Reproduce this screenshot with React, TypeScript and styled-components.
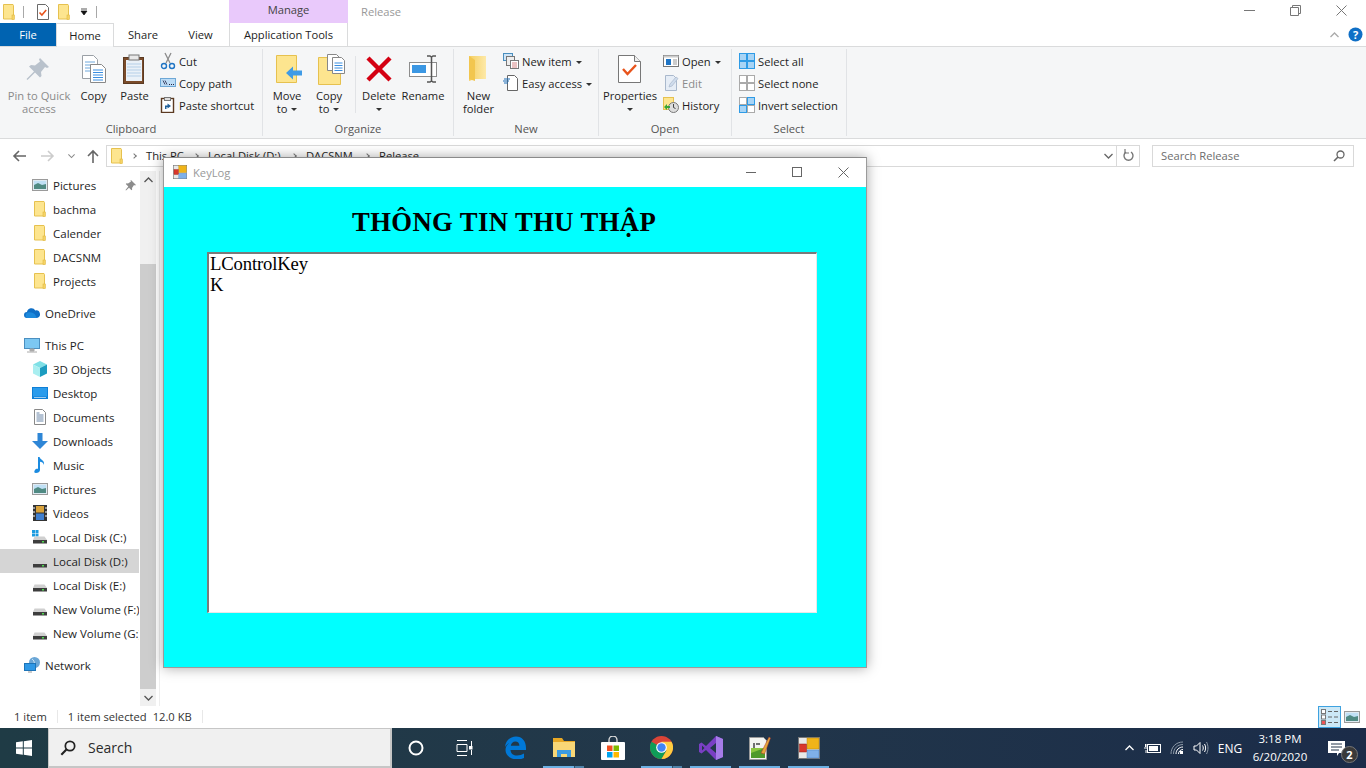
import React from "react";
import styled, { createGlobalStyle } from "styled-components";

const GlobalStyle = createGlobalStyle`
  html, body {
    margin: 0;
    padding: 0;
    width: 1366px;
    height: 768px;
    overflow: hidden;
    background: #fff;
  }
  * { box-sizing: border-box; }
  svg { display: block; flex: none; }
`;

const Desktop = styled.div`
  position: relative;
  width: 1366px;
  height: 768px;
  display: flex;
  flex-direction: column;
  background: #fff;
  color: #1e1e1e;
  font-family: "Open Sans", "Noto Sans", sans-serif;
  font-size: 11.2px;
  overflow: hidden;
`;
const Spacer = styled.span<{ $w: number }>`
  width: ${(p) => p.$w}px;
  flex: none;
`;

/* ---------- title bar ---------- */
const TitleBar = styled.div`
  height: 23px;
  display: flex;
  align-items: stretch;
  flex: none;
  padding-right: 2px;
`;
const QuickAccess = styled.div`
  width: 229px;
  display: flex;
  align-items: center;
  padding-left: 1px;
`;
const QatSep = styled.span<{ $left: number; $right: number }>`
  width: 1px;
  height: 12px;
  background: #a8a8a8;
  margin: 0 ${(p) => p.$right}px 0 ${(p) => p.$left}px;
`;
const ManageTab = styled.div`
  width: 119px;
  background: #e9c9fb;
  color: #444;
  text-align: center;
  line-height: 20px;
`;
const WindowTitle = styled.div`
  padding-left: 13px;
  color: #999;
  line-height: 24px;
  flex: 1;
`;
const WinButton = styled.div`
  width: 46px;
  display: flex;
  align-items: center;
  justify-content: center;
  padding-bottom: 3px;
`;

/* ---------- tabs ---------- */
const TabRow = styled.div`
  height: 24px;
  display: flex;
  flex: none;
  border-bottom: 1px solid #dadbdc;
`;
const FileTab = styled.div`
  width: 56px;
  height: 23px;
  background: #0063b1;
  color: #fff;
  text-align: center;
  line-height: 23px;
`;
const Tab = styled.div<{ $width: number; $active?: boolean; $bordered?: boolean }>`
  width: ${(p) => p.$width}px;
  height: 24px;
  text-align: center;
  line-height: 23px;
  background: ${(p) => (p.$active ? "linear-gradient(#fff 0 22px, #f5f6f7 22px)" : "transparent")};
  border-left: ${(p) => (p.$active || p.$bordered ? "1px solid #dadbdc" : "0")};
  border-right: ${(p) => (p.$active || p.$bordered ? "1px solid #dadbdc" : "0")};
  border-top: ${(p) => (p.$active ? "1px solid #dadbdc" : "0")};
`;
const TabTools = styled.div`
  margin-left: auto;
  display: flex;
  align-items: center;
  gap: 9px;
  padding-right: 3px;
  height: 23px;
`;

/* ---------- ribbon ---------- */
const Ribbon = styled.div`
  height: 92px;
  display: flex;
  flex: none;
  background: #f5f6f7;
  border-bottom: 1px solid #dadbdc;
  padding-top: 2px;
`;
const Group = styled.div<{ $width: number }>`
  width: ${(p) => p.$width}px;
  height: 87px;
  border-right: 1px solid #e1e3e6;
  display: flex;
  flex-direction: column;
`;
const GroupBody = styled.div`
  height: 73px;
  display: flex;
`;
const GroupLabel = styled.div`
  text-align: center;
  color: #555;
  line-height: 14px;
`;
const LargeButton = styled.div<{ $width: number; $muted?: boolean }>`
  width: ${(p) => p.$width}px;
  display: flex;
  flex-direction: column;
  align-items: center;
  text-align: center;
  line-height: 13px;
  color: ${(p) => (p.$muted ? "#8b8b8b" : "#1e1e1e")};
  padding-top: 5px;
  white-space: nowrap;
`;
const LargeIcon = styled.div`
  height: 34px;
  margin-bottom: 1px;
  display: flex;
  align-items: flex-start;
  justify-content: center;
`;
const Caret = styled.span`
  display: inline-block;
  width: 0;
  height: 0;
  border-left: 3px solid transparent;
  border-right: 3px solid transparent;
  border-top: 3px solid #333;
  vertical-align: 2px;
  margin-left: 4px;
`;
const CaretLine = styled.div`
  height: 13px;
  margin-left: -4px;
`;
const RibbonSep = styled.div`
  width: 1px;
  height: 57px;
  margin: 7px 0 0 8px;
  background: #e1e3e6;
`;
const SmallColumn = styled.div<{ $pad?: number }>`
  display: flex;
  flex-direction: column;
  padding-top: 1px;
  padding-left: ${(p) => p.$pad ?? 0}px;
`;
const SmallButton = styled.div<{ $muted?: boolean }>`
  height: 22px;
  display: flex;
  align-items: center;
  gap: 3px;
  white-space: nowrap;
  color: ${(p) => (p.$muted ? "#8b8b8b" : "#1e1e1e")};
`;

/* ---------- address bar ---------- */
const AddressRow = styled.div`
  height: 32px;
  display: flex;
  align-items: center;
  flex: none;
  padding-top: 1px;
`;
const NavButtons = styled.div`
  width: 106px;
  display: flex;
  align-items: center;
  padding-left: 12px;
`;
const AddressBox = styled.div`
  width: 1034px;
  height: 22px;
  border: 1px solid #d9d9d9;
  display: flex;
  align-items: center;
  padding-left: 2px;
`;
const Crumb = styled.span<{ $width: number }>`
  width: ${(p) => p.$width}px;
  white-space: nowrap;
`;
const CrumbArrow = styled.span`
  display: inline-block;
  width: 4px;
  height: 4px;
  border-top: 1px solid #777;
  border-right: 1px solid #777;
  transform: rotate(45deg);
  margin-right: 10px;
`;
const AddressEnd = styled.div`
  margin-left: auto;
  display: flex;
  align-items: center;
  height: 100%;
`;
const RefreshCell = styled.div`
  width: 23px;
  height: 100%;
  border-left: 1px solid #d9d9d9;
  display: flex;
  align-items: center;
  justify-content: center;
`;
const SearchBox = styled.div`
  width: 202px;
  height: 22px;
  margin-left: 12px;
  border: 1px solid #d9d9d9;
  display: flex;
  align-items: center;
  justify-content: space-between;
  padding: 0 8px;
  color: #6d6d6d;
`;

/* ---------- explorer body ---------- */
const Body = styled.div`
  flex: 1;
  display: flex;
  min-height: 0;
`;
const NavPane = styled.div`
  width: 140px;
  padding-top: 2px;
  overflow: hidden;
  flex: none;
  font-size: 11.5px;
`;
const NavRow = styled.div<{ $level: number; $selected?: boolean; $gap?: boolean }>`
  height: 24px;
  display: flex;
  align-items: center;
  gap: 5px;
  white-space: nowrap;
  padding-left: ${(p) => (p.$level === 2 ? 32 : 24)}px;
  background: ${(p) => (p.$selected ? "#d5d5d5" : "transparent")};
  margin-top: ${(p) => (p.$gap ? 8 : 0)}px;
  width: 139px;
  overflow: hidden;
`;
const NavIconBox = styled.span`
  width: 16px;
  height: 16px;
  flex: none;
  display: flex;
  align-items: center;
  justify-content: center;
`;
const PinSlot = styled.span`
  margin-left: auto;
  padding-right: 3px;
`;
const Scrollbar = styled.div`
  width: 16px;
  flex: none;
  display: flex;
  flex-direction: column;
  background: #f0f0f0;
`;
const ScrollEnd = styled.div`
  height: 17px;
  display: flex;
  align-items: center;
  justify-content: center;
`;
const ScrollTrack = styled.div`
  flex: 1;
  padding-top: 76px;
  display: flex;
`;
const ScrollThumb = styled.div`
  flex: 1;
  background: #cdcdcd;
`;
const PaneDivider = styled.div`
  width: 1px;
  margin-left: 3px;
  background: #eeeeee;
`;
const StatusBar = styled.div`
  height: 22px;
  display: flex;
  align-items: center;
  flex: none;
  padding: 0 0 2px 14px;
  color: #333;
`;
const StatusSep = styled.span<{ $left: number; $right: number }>`
  width: 1px;
  height: 13px;
  background: #e8e8e8;
  margin: 0 ${(p) => p.$right}px 0 ${(p) => p.$left}px;
`;
const ViewButtons = styled.div`
  margin-left: auto;
  display: flex;
  align-items: center;
  padding: 2px 4px 0 0;
  height: 22px;
`;
const ViewButton = styled.div<{ $active?: boolean }>`
  width: ${(p) => (p.$active ? 23 : 15)}px;
  height: 22px;
  margin-right: 3px;
  display: flex;
  align-items: center;
  justify-content: center;
  ${(p) => (p.$active ? "background: #cce8f6; border: 1px solid #3ea2e0;" : "")}
`;

/* ---------- taskbar ---------- */
const Taskbar = styled.div`
  height: 40px;
  flex: none;
  display: flex;
  align-items: stretch;
  background: linear-gradient(90deg, #1f3b45 0%, #22374a 50%, #1b2c49 100%);
  color: #fff;
`;
const StartButton = styled.div`
  width: 48px;
  display: flex;
  align-items: center;
  justify-content: center;
`;
const TaskSearch = styled.div`
  width: 344px;
  background: #f0f0f0;
  border: 1px solid #c6c6c6;
  border-width: 1px 2px 2px 1px;
  display: flex;
  align-items: center;
  gap: 12px;
  padding-left: 11px;
  color: #2b2b2b;
  font-size: 14px;
`;
const TaskSlot = styled.div<{ $width: number; $open?: boolean; $split?: boolean }>`
  position: relative;
  width: ${(p) => p.$width}px;
  display: flex;
  align-items: center;
  justify-content: center;
  padding-bottom: 1px;
  &::after {
    content: "";
    display: ${(p) => (p.$open ? "block" : "none")};
    position: absolute;
    left: 4px;
    right: 4px;
    bottom: 0;
    height: 2px;
    background: ${(p) =>
      p.$split
        ? "linear-gradient(90deg, #6cb0e3 0 31px, #2f4f68 31px 32px, #4f82a8 32px)"
        : "#6cb0e3"};
  }
`;
const Tray = styled.div`
  margin-left: auto;
  display: flex;
  align-items: center;
  font-size: 12px;
`;
const TraySlot = styled.div<{ $width: number; $pad?: number }>`
  width: ${(p) => p.$width}px;
  padding-left: ${(p) => p.$pad ?? 0}px;
  display: flex;
  align-items: center;
  justify-content: center;
`;
const Clock = styled.div`
  width: 76px;
  text-align: center;
  line-height: 18px;
  font-size: 11.5px;
`;
const NotifyWrap = styled.div`
  position: relative;
  width: 48px;
  height: 40px;
  display: flex;
  align-items: center;
  justify-content: center;
  padding-right: 11px;
`;
const NotifyBadge = styled.div`
  position: absolute;
  left: 23px;
  top: 18px;
  width: 17px;
  height: 17px;
  border-radius: 50%;
  background: #3a3a3a;
  border: 1px solid #777;
  text-align: center;
  line-height: 15px;
  font-size: 11px;
  font-weight: 700;
`;

/* ---------- KeyLog window ---------- */
const FormWindow = styled.div`
  position: absolute;
  left: 163px;
  top: 157px;
  width: 704px;
  height: 511px;
  display: flex;
  flex-direction: column;
  background: #00ffff;
  border: 1px solid #9b9b9b;
  border-top-color: #8a8a8a;
  box-shadow: 0 0 12px rgba(0, 0, 0, 0.35);
`;
const FormTitleBar = styled.div`
  height: 29px;
  flex: none;
  background: #fff;
  display: flex;
  align-items: center;
  padding: 0 0 1px 9px;
  gap: 6px;
  color: #999;
`;
const FormControls = styled.div`
  margin-left: auto;
  display: flex;
  align-items: center;
`;
const FormControl = styled.div`
  width: 46px;
  display: flex;
  justify-content: center;
`;
const Heading = styled.div`
  height: 65px;
  padding-top: 20px;
  padding-left: 188px;
  font-family: "Liberation Serif", serif;
  font-weight: 700;
  font-size: 26.67px;
  letter-spacing: 0.4px;
  line-height: 31px;
  color: #000;
  white-space: nowrap;
`;
const LogBox = styled.div`
  width: 610px;
  height: 361px;
  margin-left: 43px;
  background: #fff;
  border-style: solid;
  border-width: 2px 1px 1px 2px;
  border-color: #7a7a7a #e8e8e8 #e8e8e8 #7a7a7a;
  padding: 0 1px;
  font-family: "Liberation Serif", serif;
  font-size: 18.67px;
  letter-spacing: -0.15px;
  color: #000;
`;
const LogLine = styled.div`
  height: 21px;
  line-height: 19px;
`;

/* ---------- icons ---------- */
const Folder = ({ s = 16 }: { s?: number }) => (
  <svg width={s} height={s} viewBox="0 0 16 16">
    <path d="M2.500 .5h9.500l.5 1v13.500h-10z" fill="#fde58f" stroke="#e6c14f" />
    <rect x="11" y="11" width="2.400" height="4.500" fill="#f6d365" stroke="#e0b840" strokeWidth=".6" />
  </svg>
);
const CheckDoc = ({ s = 16 }: { s?: number }) => (
  <svg width={s} height={s} viewBox="0 0 16 16">
    <path d="M2.500 .5h8l3 3v12h-11z" fill="#fff" stroke="#6a6a6a" />
    <path d="M4.500 8.500l2.400 2.500 4.300-5" fill="none" stroke="#e8541c" strokeWidth="1.600" />
  </svg>
);
const Pin = () => (
  <svg width="30" height="30" viewBox="0 0 30 30">
    <path d="M16 4l9 9-2 1-2-1-4 5 .5 4-1.500 1.500-5-5-7.500 7.500-1-1 7.500-7.500-5-5L7 11l4 .5 5-4-1-2z" fill="#b9c2cc" />
  </svg>
);
const CopyLarge = () => (
  <svg width="26" height="30" viewBox="0 0 26 30">
    <path d="M1.500 1.500h11l4 4v19h-15z" fill="#fff" stroke="#9aa0a6" />
    <g stroke="#6fa8dc"><path d="M4 8h10M4 11h10M4 14h10M4 17h10" /></g>
    <path d="M9.500 10.500h11l4 4v14h-15z" fill="#fff" stroke="#888" />
    <g stroke="#3b8ee0"><path d="M12 16h10M12 18.500h10M12 21h10M12 23.500h10M12 26h10" /></g>
  </svg>
);
const PasteLarge = () => (
  <svg width="24" height="30" viewBox="0 0 24 30">
    <rect x=".5" y="3.500" width="20" height="26" fill="#7a4b2a" stroke="#5b3a22" />
    <rect x="3" y="6" width="16" height="21" fill="#eaf1f8" />
    <g stroke="#b5cfe8"><path d="M4 10h14M4 13h14M4 16h14M4 19h14M4 22h14" /></g>
    <rect x="6" y="1" width="10" height="5" fill="#e8e8e8" stroke="#777" />
  </svg>
);
const Scissors = () => (
  <svg width="16" height="18" viewBox="0 0 16 18">
    <path d="M5 1l5 10M11 1L6 11" stroke="#8b8b8b" strokeWidth="1.300" fill="none" />
    <circle cx="4" cy="14" r="2.500" fill="none" stroke="#1f74c4" strokeWidth="1.400" />
    <circle cx="12" cy="14" r="2.500" fill="none" stroke="#1f74c4" strokeWidth="1.400" />
  </svg>
);
const CopyPath = () => (
  <svg width="16" height="16" viewBox="0 0 16 16">
    <rect x=".5" y="3.500" width="15" height="8" fill="#bcdcf6" stroke="#6ea8d6" />
    <path d="M3 5.500l2 4M5 5.500l2 4" stroke="#224" strokeWidth=".8" />
    <path d="M9 9.500h1M11 9.500h1M13 9.500h1" stroke="#224" />
  </svg>
);
const PasteShortcut = () => (
  <svg width="16" height="16" viewBox="0 0 16 16">
    <rect x="1.500" y="1.500" width="12" height="14" fill="#fff" stroke="#5b3a22" strokeWidth="1.400" />
    <rect x="4.500" y=".5" width="6" height="3" fill="#ddd" stroke="#777" />
    <path d="M5 12V8.500h2.500V6.500L11 9l-3.500 2.500V10H6.500v2z" fill="#1f5f99" />
  </svg>
);
const MoveTo = () => (
  <svg width="31" height="30" viewBox="-3 0 31 30">
    <path d="M1.500 1.500h20v27h-20z" fill="#fde58f" stroke="#e6c14f" />
    <path d="M11 19l7-6.500v4h9v5h-9v4z" fill="#3f9be6" />
  </svg>
);
const CopyTo = () => (
  <svg width="31" height="32" viewBox="-3 0 31 32">
    <path d="M1.500 3.500h22v27h-22z" fill="#fde58f" stroke="#e6c14f" />
    <path d="M10.500 .5h9l3 3v13h-12z" fill="#fff" stroke="#888" />
    <path d="M15.500 3.500h9l3 3v13h-12z" fill="#fff" stroke="#888" />
    <g stroke="#3b8ee0"><path d="M17.500 9h8M17.500 11.500h8M17.500 14h8M17.500 16.500h8" /></g>
  </svg>
);
const DeleteX = () => (
  <svg width="28" height="30" viewBox="0 0 28 30">
    <path d="M3 4l22 22M25 4L3 26" stroke="#d40012" strokeWidth="4.400" />
  </svg>
);
const Rename = () => (
  <svg width="28" height="30" viewBox="0 0 28 30">
    <rect x=".5" y="8.500" width="27" height="14" fill="#fff" stroke="#8d8d8d" />
    <rect x="3" y="11" width="14" height="8" fill="#3b97e3" />
    <path d="M18 2h3l1.500 1L24 2h3M22.500 3v24M18 28h3l1.500-1 1.500 1h3" fill="none" stroke="#555" strokeWidth="1.500" />
  </svg>
);
const NewFolder = () => (
  <svg width="22" height="30" viewBox="0 0 22 30">
    <defs>
      <linearGradient id="nf" x1="0" x2="1" y1="0" y2="0">
        <stop offset="0" stopColor="#f5cf62" />
        <stop offset="1" stopColor="#fde9a8" />
      </linearGradient>
    </defs>
    <path d="M1 2h17v23H7l-6 2z" fill="url(#nf)" />
    <path d="M1 2l6 4v21l-6-2z" fill="#f2c64f" />
  </svg>
);
const NewItem = () => (
  <svg width="16" height="16" viewBox="0 0 16 16">
    <rect x=".5" y=".5" width="9" height="7" fill="#cfe5f7" stroke="#4a8fbf" />
    <rect x="3.500" y="3.500" width="8" height="9" fill="#eee" stroke="#777" />
    <rect x="7.500" y="7.500" width="8" height="8" fill="#fff" stroke="#777" />
    <path d="M9 10h5M9 12h5M9 14h5" stroke="#c66" strokeWidth=".8" />
  </svg>
);
const EasyAccess = () => (
  <svg width="16" height="16" viewBox="0 0 16 16">
    <path d="M4.500 .5h7l3 3v12h-10z" fill="#fff" stroke="#666" />
    <path d="M1 4h6M0 6h6M1 8h4" stroke="#1f6fb8" />
  </svg>
);
const PropertiesIcon = () => (
  <svg width="24" height="30" viewBox="0 0 24 30">
    <path d="M.5 1.500h16l6 6v21H.5z" fill="#fff" stroke="#777" />
    <path d="M16.500 1.500v6h6" fill="#eee" stroke="#777" />
    <path d="M5 15l4.500 5 8.500-9" fill="none" stroke="#e8541c" strokeWidth="2.400" />
  </svg>
);
const OpenIcon = () => (
  <svg width="16" height="16" viewBox="0 0 16 16">
    <rect x=".5" y="2.500" width="15" height="11" fill="#fff" stroke="#777" />
    <rect x=".5" y="2.500" width="15" height="2" fill="#ccc" />
    <rect x="3" y="6" width="5" height="6" fill="#1f74c4" />
    <path d="M10 7h4M10 9h4M10 11h4" stroke="#999" />
  </svg>
);
const EditIcon = () => (
  <svg width="16" height="16" viewBox="0 0 16 16">
    <path d="M2.500 .5h8l3 3v12h-11z" fill="#e6edf6" stroke="#a9b8cc" />
    <path d="M6 12l1-3 6-7 2 1.500-6 7.500z" fill="#cfdcec" stroke="#a9b8cc" strokeWidth=".7" />
  </svg>
);
const HistoryIcon = () => (
  <svg width="16" height="16" viewBox="0 0 16 16">
    <rect x=".5" y=".5" width="10" height="12" fill="#fde58f" stroke="#e6c14f" />
    <circle cx="10.500" cy="10.500" r="5" fill="#ddd" stroke="#777" />
    <path d="M10.500 7v3.500l2 1" fill="none" stroke="#444" />
    <path d="M1 10l3-3v2h3v2H4v2z" fill="#3aa635" />
  </svg>
);
const GridSelect = ({ on }: { on: boolean[] }) => (
  <svg width="16" height="16" viewBox="0 0 16 16">
    {[0, 1, 2, 3].map((i) => (
      <rect
        key={i}
        x={i % 2 ? 8.5 : 0.5}
        y={i > 1 ? 8.5 : 0.5}
        width="7"
        height="7"
        fill={on[i] ? "#a8d4f5" : "#fff"}
        stroke={on[i] ? "#2e9be6" : "#aaa"}
      />
    ))}
  </svg>
);
const Chevron = ({ up, color = "#777", w = 9 }: { up?: boolean; color?: string; w?: number }) => (
  <svg width={w} height="6" viewBox="0 0 9 6">
    <path d={up ? "M.5 5l4-4 4 4" : "M.5 1l4 4 4-4"} fill="none" stroke={color} strokeWidth="1.300" />
  </svg>
);
const Arrow = ({ dir, color }: { dir: "left" | "right" | "up"; color: string }) => {
  const d = {
    left: "M14 7H2M7 2L2 7l5 5",
    right: "M0 7h12M7 2l5 5-5 5",
    up: "M7 14V2M2 7l5-5 5 5",
  }[dir];
  return (
    <svg width="14" height="14" viewBox="0 0 14 14">
      <path d={d} fill="none" stroke={color} strokeWidth="1.600" />
    </svg>
  );
};
const Magnifier = ({ color = "#666", s = 12 }: { color?: string; s?: number }) => (
  <svg width={s} height={s} viewBox="0 0 12 12">
    <circle cx="7.500" cy="4.500" r="3.500" fill="none" stroke={color} strokeWidth="1.300" />
    <path d="M5 7l-4 4" stroke={color} strokeWidth="1.600" />
  </svg>
);
const PictureIcon = () => (
  <svg width="16" height="14" viewBox="0 0 16 14">
    <rect x=".5" y="1.500" width="15" height="11" fill="#dfeaf2" stroke="#9a9a9a" />
    <rect x="2" y="3" width="12" height="4" fill="#bfe0f5" />
    <path d="M2 7l4-2 4 2 4-1v5H2z" fill="#4f8a83" />
  </svg>
);
const Cloud = () => (
  <svg width="16" height="12" viewBox="0 0 16 12">
    <path d="M3 11a3 3 0 0 1 0-6 4.500 4.500 0 0 1 8.300-1.500A3.500 3.500 0 0 1 13 11z" fill="#0f6fc6" />
    <path d="M3 11a3 3 0 0 1 1-5.500c3-1 6 1 7 2l2 3.500z" fill="#1c89dc" />
  </svg>
);
const Monitor = () => (
  <svg width="16" height="15" viewBox="0 0 16 15">
    <rect x=".5" y=".5" width="15" height="10" fill="#7cc7f2" stroke="#4b8fc0" />
    <path d="M6 11h4v2H6zM3 14h10" fill="#aaa" stroke="#aaa" />
  </svg>
);
const Cube = () => (
  <svg width="16" height="16" viewBox="0 0 16 16">
    <path d="M8 0l7 3.500-7 3.500-7-3.500z" fill="#7fe0e6" />
    <path d="M1 3.500l7 3.500v9l-7-3.500z" fill="#a9eef0" />
    <path d="M15 3.500L8 7v9l7-3.500z" fill="#1c9cc0" />
  </svg>
);
const DesktopIcon = () => (
  <svg width="16" height="12" viewBox="0 0 16 12">
    <rect width="16" height="12" fill="#0f7fd6" />
    <rect x="1" y="1" width="14" height="8.500" fill="#2b9cec" />
    <path d="M2 10.500h12" stroke="#fff" strokeWidth=".6" />
  </svg>
);
const DocIcon = () => (
  <svg width="16" height="16" viewBox="0 0 16 16">
    <path d="M2.500 .5h8l3 3v12h-11z" fill="#fff" stroke="#888" />
    <path d="M4.500 4h3M4.500 6h7M4.500 8h7M4.500 10h7M4.500 12h7" stroke="#6a86a8" />
  </svg>
);
const DownArrow = () => (
  <svg width="16" height="16" viewBox="0 0 16 16">
    <path d="M5.500 0h5v8H16l-8 8-8-8h5.500z" fill="#2e86d6" />
  </svg>
);
const MusicIcon = () => (
  <svg width="12" height="16" viewBox="0 0 12 16">
    <path d="M4 0h1.600c.4 3 5.400 3 4.400 8-.6-2.600-2.300-3-4-3.300V13c0 2-2 3-4 3S0 14.500.8 13.200C1.700 11.700 3 11.500 4 11.800z" fill="#1b8be0" />
  </svg>
);
const VideoIcon = () => (
  <svg width="14" height="16" viewBox="0 0 14 16">
    <rect width="14" height="16" fill="#333" />
    <rect x="3" y="1" width="8" height="6.500" fill="#d9a23b" />
    <rect x="3" y="8.500" width="8" height="6.500" fill="#3f7fd0" />
    <path d="M1 2v2M1 6v2M1 10v2M13 2v2M13 6v2M13 10v2" stroke="#fff" />
  </svg>
);
const Disk = ({ system }: { system?: boolean }) => (
  <svg width="16" height="14" viewBox="0 0 16 14">
    {system && (
      <g fill="#1b9be0">
        <rect x="0" y="0" width="3" height="3" />
        <rect x="3.500" y="0" width="3" height="3" />
        <rect x="0" y="3.500" width="3" height="3" />
        <rect x="3.500" y="3.500" width="3" height="3" />
      </g>
    )}
    <path d="M2.500 6.500h10L15 10H1z" fill="#d0d0d0" />
    <rect x="1" y="10" width="14" height="3.500" fill="#3d3d3d" />
    <rect x="10" y="11" width="2" height="1.500" fill="#4fd84f" />
  </svg>
);
const NetworkIcon = () => (
  <svg width="17" height="16" viewBox="0 0 17 16">
    <circle cx="10.500" cy="5.500" r="5.500" fill="#6aa6d6" />
    <path d="M8 2c2 1 3 4 2 7" stroke="#cfe5f5" fill="none" />
    <rect x=".5" y="6.500" width="11" height="7" fill="#2e98e6" stroke="#1d74b8" />
    <path d="M4 15h4" stroke="#999" />
  </svg>
);
const Pushpin = () => (
  <svg width="11" height="11" viewBox="0 0 11 11">
    <path d="M6 0l5 5-1 .5-1-.5-2 3 .2 1.500-.7.700-2.500-2.500L1 10.500 .5 10 3.300 6.500.8 4l.7-.7 1.500.2 3-2-.5-1z" fill="#8c8c8c" />
  </svg>
);
const WinLogo = () => (
  <svg width="16" height="16" viewBox="0 0 16 16">
    <path d="M0 2.300L6.800 1.300V7.600H0zM7.800 1.200L16 0V7.600H7.800zM0 8.500H6.800V14.700L0 13.700zM7.800 8.500H16V16L7.800 14.800z" fill="#fff" />
  </svg>
);
const TaskView = () => (
  <svg width="17" height="16" viewBox="0 0 17 16">
    <path d="M1 .5h10M1 15.500h10M1 4.500h10v7H1zM15.500 1v5M15.500 10v5" fill="none" stroke="#fff" strokeWidth="1" />
    <rect x="13" y="6" width="3.500" height="3.500" fill="#fff" />
  </svg>
);
const EdgeLogo = () => (
  <svg width="22" height="23" viewBox="0 0 22 23">
    <path
      d="M1 11C1.500 4.500 6.500 .5 12 .5c6 0 10 4.500 10 11.500v2H6.500c.3 3.800 3 5.500 6.500 5.500 2.800 0 5-.8 7-2v4.500c-2 1-4.500 1.500-7.500 1.500C6 23 1.500 19 1.500 14c0-3 1.300-5.300 3.800-7C3.500 8 2 9.300 1 11zM6.800 9.800h8.600c0-2.800-1.700-4.300-4-4.300-2.400 0-4.200 1.600-4.600 4.300z"
      fill="#0078d7"
    />
  </svg>
);
const ExplorerLogo = () => (
  <svg width="22" height="20" viewBox="0 0 22 20">
    <path d="M0 0h9l2 3h11v14H0z" fill="#e8a825" />
    <rect x="0" y="4" width="22" height="15" fill="#f9d776" />
    <path d="M4 19v-7h14v7h-4v-3H8v3z" fill="#3d9be0" />
  </svg>
);
const StoreLogo = () => (
  <svg width="24" height="24" viewBox="0 0 24 24">
    <path d="M8 7V4a4 4 0 0 1 8 0v3" fill="none" stroke="#ddd" strokeWidth="1.300" />
    <rect y="6" width="24" height="18" rx="1" fill="#fff" />
    <rect x="6" y="9.500" width="5.500" height="5.500" fill="#f25022" />
    <rect x="12.500" y="9.500" width="5.500" height="5.500" fill="#7fba00" />
    <rect x="6" y="16" width="5.500" height="5.500" fill="#00a4ef" />
    <rect x="12.500" y="16" width="5.500" height="5.500" fill="#ffb900" />
  </svg>
);
const ChromeLogo = () => (
  <svg width="23" height="23" viewBox="0 0 24 24">
    <circle cx="12" cy="12" r="12" fill="#db4437" />
    <path d="M12 12L1.600 6A12 12 0 0 0 12 24l5.200-9z" fill="#0f9d58" />
    <path d="M12 6h10.400A12 12 0 0 1 12 24l5.200-9z" fill="#ffcd40" />
    <circle cx="12" cy="12" r="5.600" fill="#fff" />
    <circle cx="12" cy="12" r="4.400" fill="#4285f4" />
  </svg>
);
const VsLogo = () => (
  <svg width="24" height="24" viewBox="0 0 24 24">
    <path d="M17 0l7 3v18l-7 3L7 14l-4.500 3.500L0 16V8l2.500-1.500L7 10z" fill="#7a3fc4" />
    <path d="M17 0l7 3v18l-7 3z" fill="#a67ce8" />
    <path d="M17 7l-6 5 6 5zM3 9.500v5L5.500 12z" fill="#233848" />
  </svg>
);
const NoteLogo = () => (
  <svg width="22" height="24" viewBox="0 0 22 24">
    <path d="M.5 1.500h14l3 3v19H.5z" fill="#f4f4f0" stroke="#999" />
    <path d="M2 12h14v10H2z" fill="#8cc63f" />
    <path d="M2 17l14-5v10H2z" fill="#4f9a2a" />
    <path d="M5 7v5M7 8h4" stroke="#444" strokeWidth="1.500" />
    <path d="M12 17l8-16 1.500 1-6 16z" fill="#e5a93a" stroke="#a33" strokeWidth=".5" />
  </svg>
);
const FormLogo = ({ s = 22 }: { s?: number }) => (
  <svg width={s} height={s} viewBox="0 0 22 22">
    <rect x=".5" y=".5" width="21" height="21" fill="#e8e8e8" stroke="#777" />
    <rect x="9" y="1" width="12" height="11" fill="#f0b419" stroke="#b88812" strokeWidth=".5" />
    <rect x="9" y="13" width="12" height="8" fill="#7fb0e8" stroke="#4a7fc0" strokeWidth=".5" />
    <rect x="1.500" y="7" width="7" height="8" fill="#d9372c" stroke="#8c1f18" strokeWidth=".5" />
  </svg>
);
const BatteryIcon = () => (
  <svg width="17" height="12" viewBox="0 0 17 12">
    <rect x="3.500" y="2.500" width="13" height="8" fill="none" stroke="#fff" />
    <rect x="5" y="4" width="9" height="5" fill="#fff" />
    <path d="M0 6h4M1.500 2v3M3 2v3M2 8v3" stroke="#fff" />
  </svg>
);
const WifiIcon = () => (
  <svg width="14" height="14" viewBox="0 0 14 14">
    <g fill="none" stroke="#8a97a5">
      <path d="M1 13C1 6 6 1 13 1" />
      <path d="M3.500 13c0-5.500 4-9.500 9.500-9.500" />
    </g>
    <g fill="none" stroke="#fff">
      <path d="M6 13c0-4 3-7 7-7" />
      <path d="M8.500 13c0-2.500 2-4.500 4.500-4.500" />
    </g>
    <rect x="10" y="10" width="3" height="3" fill="#fff" />
  </svg>
);
const SpeakerIcon = () => (
  <svg width="16" height="14" viewBox="0 0 16 14">
    <path d="M1 5h2.500L7 1.500v11L3.500 9H1z" fill="none" stroke="#fff" />
    <path d="M9.500 4.500c1 1.500 1 3.500 0 5M11.500 3c1.500 2.500 1.500 5.500 0 8" fill="none" stroke="#fff" />
    <path d="M13.500 1c2 3.500 2 8.500 0 12" fill="none" stroke="#8a97a5" />
  </svg>
);
const NotifyIcon = () => (
  <svg width="17" height="15" viewBox="0 0 17 15">
    <path d="M0 0h17v12h-6l-2 3v-3H0z" fill="#fff" />
    <path d="M3 3h11M3 6h11M3 9h8" stroke="#22344a" />
  </svg>
);
const DetailsView = () => (
  <svg width="17" height="16" viewBox="0 0 17 16">
    <rect x=".5" y=".5" width="4" height="4" fill="#fff" stroke="#777" />
    <rect x=".5" y="6" width="4" height="4" fill="#fff" stroke="#777" />
    <rect x=".5" y="11.500" width="4" height="4" fill="#e55" stroke="#777" />
    <path d="M7 2.500h4M13 2.500h4M7 8h4M13 8h4M7 13.500h4M13 13.500h4" stroke="#666" />
  </svg>
);

type SmallItem = { icon: React.ReactNode; label: string; caret?: boolean; muted?: boolean };

const SmallStack = ({ items, pad }: { items: SmallItem[]; pad?: number }) => (
  <SmallColumn $pad={pad}>
    {items.map((it) => (
      <SmallButton key={it.label} $muted={it.muted}>
        {it.icon}
        <span>
          {it.label}
          {it.caret && <Caret />}
        </span>
      </SmallButton>
    ))}
  </SmallColumn>
);

const navItems: { label: string; level: number; icon: React.ReactNode; gap?: boolean; selected?: boolean; pin?: boolean }[] = [
  { label: "Pictures", level: 2, icon: <PictureIcon />, pin: true },
  { label: "bachma", level: 2, icon: <Folder /> },
  { label: "Calender", level: 2, icon: <Folder /> },
  { label: "DACSNM", level: 2, icon: <Folder /> },
  { label: "Projects", level: 2, icon: <Folder /> },
  { label: "OneDrive", level: 1, icon: <Cloud />, gap: true },
  { label: "This PC", level: 1, icon: <Monitor />, gap: true },
  { label: "3D Objects", level: 2, icon: <Cube /> },
  { label: "Desktop", level: 2, icon: <DesktopIcon /> },
  { label: "Documents", level: 2, icon: <DocIcon /> },
  { label: "Downloads", level: 2, icon: <DownArrow /> },
  { label: "Music", level: 2, icon: <MusicIcon /> },
  { label: "Pictures", level: 2, icon: <PictureIcon /> },
  { label: "Videos", level: 2, icon: <VideoIcon /> },
  { label: "Local Disk (C:)", level: 2, icon: <Disk system /> },
  { label: "Local Disk (D:)", level: 2, icon: <Disk />, selected: true },
  { label: "Local Disk (E:)", level: 2, icon: <Disk /> },
  { label: "New Volume (F:)", level: 2, icon: <Disk /> },
  { label: "New Volume (G:)", level: 2, icon: <Disk /> },
  { label: "Network", level: 1, icon: <NetworkIcon />, gap: true },
];

const App = () => (
  <Desktop>
    <GlobalStyle />

    <TitleBar>
      <QuickAccess>
        <Folder />
        <QatSep $left={6} $right={11} />
        <CheckDoc />
        <Spacer $w={5} />
        <Folder />
        <Spacer $w={8} />
        <svg width="8" height="8" viewBox="0 0 8 8">
          <path d="M1 1h6M1 3h6l-3 4z" fill="#111" stroke="#111" strokeWidth=".7" />
        </svg>
        <QatSep $left={8} $right={0} />
      </QuickAccess>
      <ManageTab>Manage</ManageTab>
      <WindowTitle>Release</WindowTitle>
      <WinButton>
        <svg width="11" height="1"><rect width="11" height="1" fill="#777" /></svg>
      </WinButton>
      <WinButton>
        <svg width="11" height="11" viewBox="0 0 11 11">
          <path d="M2.500 2.500V.5h8v8h-2M.5 2.500h8v8h-8z" fill="none" stroke="#777" />
        </svg>
      </WinButton>
      <WinButton>
        <svg width="11" height="11" viewBox="0 0 11 11">
          <path d="M.5 .5l10 10M10.500 .5l-10 10" stroke="#777" />
        </svg>
      </WinButton>
    </TitleBar>

    <TabRow>
      <FileTab>File</FileTab>
      <Tab $width={58} $active>Home</Tab>
      <Tab $width={58}>Share</Tab>
      <Tab $width={57}>View</Tab>
      <Tab $width={119} $bordered>Application Tools</Tab>
      <TabTools>
        <Chevron up color="#aaa" />
        <svg width="15" height="15" viewBox="0 0 15 15">
          <circle cx="7.500" cy="7.500" r="7" fill="#0f6fc6" />
          <text x="7.500" y="11.500" textAnchor="middle" fontSize="11" fontWeight="700" fill="#fff" fontFamily="Open Sans">?</text>
        </svg>
      </TabTools>
    </TabRow>

    <Ribbon>
      <Group $width={263}>
        <GroupBody>
          <LargeButton $width={78} $muted>
            <LargeIcon><Pin /></LargeIcon>
            Pin to Quick
            <br />
            access
          </LargeButton>
          <LargeButton $width={31}>
            <LargeIcon><CopyLarge /></LargeIcon>
            Copy
          </LargeButton>
          <LargeButton $width={51}>
            <LargeIcon><PasteLarge /></LargeIcon>
            Paste
          </LargeButton>
          <SmallStack
            items={[
              { icon: <Scissors />, label: "Cut" },
              { icon: <CopyPath />, label: "Copy path" },
              { icon: <PasteShortcut />, label: "Paste shortcut" },
            ]}
          />
        </GroupBody>
        <GroupLabel>Clipboard</GroupLabel>
      </Group>

      <Group $width={191}>
        <GroupBody>
          <LargeButton $width={48}>
            <LargeIcon><MoveTo /></LargeIcon>
            Move
            <div>to<Caret /></div>
          </LargeButton>
          <LargeButton $width={36}>
            <LargeIcon><CopyTo /></LargeIcon>
            Copy
            <div>to<Caret /></div>
          </LargeButton>
          <RibbonSep />
          <LargeButton $width={46}>
            <LargeIcon><DeleteX /></LargeIcon>
            Delete
            <CaretLine><Caret /></CaretLine>
          </LargeButton>
          <LargeButton $width={42}>
            <LargeIcon><Rename /></LargeIcon>
            Rename
          </LargeButton>
        </GroupBody>
        <GroupLabel>Organize</GroupLabel>
      </Group>

      <Group $width={145}>
        <GroupBody>
          <LargeButton $width={49}>
            <LargeIcon><NewFolder /></LargeIcon>
            New
            <br />
            folder
          </LargeButton>
          <SmallStack
            items={[
              { icon: <NewItem />, label: "New item", caret: true },
              { icon: <EasyAccess />, label: "Easy access", caret: true },
            ]}
          />
        </GroupBody>
        <GroupLabel>New</GroupLabel>
      </Group>

      <Group $width={133}>
        <GroupBody>
          <LargeButton $width={62}>
            <LargeIcon><PropertiesIcon /></LargeIcon>
            Properties
            <CaretLine><Caret /></CaretLine>
          </LargeButton>
          <SmallStack
            pad={2}
            items={[
              { icon: <OpenIcon />, label: "Open", caret: true },
              { icon: <EditIcon />, label: "Edit", muted: true },
              { icon: <HistoryIcon />, label: "History" },
            ]}
          />
        </GroupBody>
        <GroupLabel>Open</GroupLabel>
      </Group>

      <Group $width={115}>
        <GroupBody>
          <SmallStack
            pad={7}
            items={[
              { icon: <GridSelect on={[true, true, true, true]} />, label: "Select all" },
              { icon: <GridSelect on={[false, false, false, false]} />, label: "Select none" },
              { icon: <GridSelect on={[false, true, true, false]} />, label: "Invert selection" },
            ]}
          />
        </GroupBody>
        <GroupLabel>Select</GroupLabel>
      </Group>
    </Ribbon>

    <AddressRow>
      <NavButtons>
        <Arrow dir="left" color="#666" />
        <Spacer $w={15} />
        <Arrow dir="right" color="#ccc" />
        <Spacer $w={13} />
        <Chevron color="#888" w={7} />
        <Spacer $w={11} />
        <Arrow dir="up" color="#666" />
      </NavButtons>
      <AddressBox>
        <Folder />
        <Spacer $w={7} />
        <CrumbArrow />
        <Crumb $width={48}>This PC</Crumb>
        <CrumbArrow />
        <Crumb $width={84}>Local Disk (D:)</Crumb>
        <CrumbArrow />
        <Crumb $width={59}>DACSNM</Crumb>
        <CrumbArrow />
        <Crumb $width={50}>Release</Crumb>
        <AddressEnd>
          <Chevron color="#666" />
          <Spacer $w={3} />
          <RefreshCell>
            <svg width="11" height="13" viewBox="0 0 11 13">
              <path d="M3 3a4.500 4.500 0 1 0 5 0" fill="none" stroke="#777" strokeWidth="1.400" />
              <path d="M2 0v4h4" fill="none" stroke="#777" strokeWidth="1.200" />
            </svg>
          </RefreshCell>
        </AddressEnd>
      </AddressBox>
      <SearchBox>
        Search Release
        <Magnifier />
      </SearchBox>
    </AddressRow>

    <Body>
      <NavPane>
        {navItems.map((it, i) => (
          <NavRow key={i} $level={it.level} $gap={it.gap} $selected={it.selected}>
            <NavIconBox>{it.icon}</NavIconBox>
            {it.label}
            {it.pin && <PinSlot><Pushpin /></PinSlot>}
          </NavRow>
        ))}
      </NavPane>
      <Scrollbar>
        <ScrollEnd><Chevron up color="#555" /></ScrollEnd>
        <ScrollTrack><ScrollThumb /></ScrollTrack>
        <ScrollEnd><Chevron color="#555" /></ScrollEnd>
      </Scrollbar>
      <PaneDivider />
    </Body>

    <StatusBar>
      1 item
      <StatusSep $left={10} $right={10} />
      1 item selected
      <Spacer $w={6} />
      12.0 KB
      <StatusSep $left={10} $right={0} />
      <ViewButtons>
        <ViewButton $active><DetailsView /></ViewButton>
        <ViewButton><PictureIcon /></ViewButton>
      </ViewButtons>
    </StatusBar>

    <Taskbar>
      <StartButton><WinLogo /></StartButton>
      <TaskSearch>
        <Magnifier color="#222" s={16} />
        Search
      </TaskSearch>
      <TaskSlot $width={48}>
        <svg width="16" height="16" viewBox="0 0 16 16">
          <circle cx="8" cy="8" r="6.500" fill="none" stroke="#fff" strokeWidth="2" />
        </svg>
      </TaskSlot>
      <TaskSlot $width={48}><TaskView /></TaskSlot>
      <Spacer $w={2} />
      <TaskSlot $width={49}><EdgeLogo /></TaskSlot>
      <TaskSlot $width={49} $open $split><ExplorerLogo /></TaskSlot>
      <TaskSlot $width={49}><StoreLogo /></TaskSlot>
      <TaskSlot $width={49} $open $split><ChromeLogo /></TaskSlot>
      <TaskSlot $width={49} $open><VsLogo /></TaskSlot>
      <TaskSlot $width={49} $open><NoteLogo /></TaskSlot>
      <TaskSlot $width={49} $open><FormLogo /></TaskSlot>
      <Tray>
        <TraySlot $width={22}><Chevron up color="#fff" w={11} /></TraySlot>
        <TraySlot $width={24}><BatteryIcon /></TraySlot>
        <TraySlot $width={26}><WifiIcon /></TraySlot>
        <TraySlot $width={22}><SpeakerIcon /></TraySlot>
        <TraySlot $width={30} $pad={6}>ENG</TraySlot>
        <Clock>
          3:18 PM
          <br />
          6/20/2020
        </Clock>
        <NotifyWrap>
          <NotifyIcon />
          <NotifyBadge>2</NotifyBadge>
        </NotifyWrap>
      </Tray>
    </Taskbar>

    <FormWindow>
      <FormTitleBar>
        <FormLogo s={14} />
        KeyLog
        <FormControls>
          <FormControl>
            <svg width="10" height="1"><rect width="10" height="1" fill="#666" /></svg>
          </FormControl>
          <FormControl>
            <svg width="10" height="10" viewBox="0 0 10 10">
              <rect x=".5" y=".5" width="9" height="9" fill="none" stroke="#666" />
            </svg>
          </FormControl>
          <FormControl>
            <svg width="11" height="11" viewBox="0 0 11 11">
              <path d="M.5 .5l10 10M10.500 .5l-10 10" stroke="#666" />
            </svg>
          </FormControl>
        </FormControls>
      </FormTitleBar>
      <Heading>THÔNG TIN THU THẬP</Heading>
      <LogBox>
        <LogLine>LControlKey</LogLine>
        <LogLine>K</LogLine>
      </LogBox>
    </FormWindow>
  </Desktop>
);

export default App;
